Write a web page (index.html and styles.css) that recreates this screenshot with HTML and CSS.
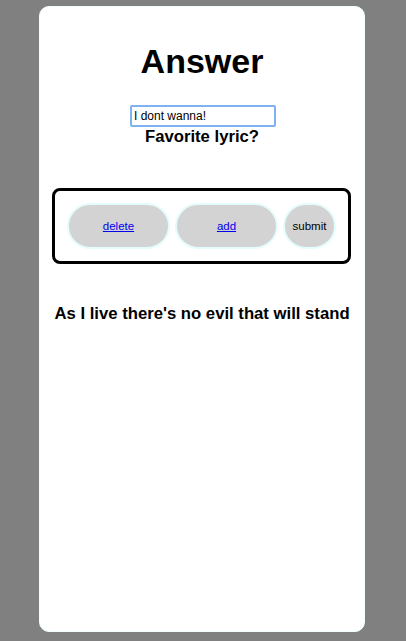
FILE: index.html
```html
<!DOCTYPE html>
<html>
<head>
<meta charset="utf-8">
<link rel="stylesheet" href="styles.css">
</head>
<body>
<div class="card">
  <h1 class="title">Answer</h1>
  <div class="form">
    <input class="lyric-input" type="text" value="I dont wanna!">
    <label class="label">Favorite lyric?</label>
  </div>
  <div class="actions">
    <button class="btn wide"><a href="#">delete</a></button>
    <button class="btn wide"><a href="#">add</a></button>
    <button class="btn round">submit</button>
  </div>
  <p class="lyric">As I live there's no evil that will stand</p>
</div>
</body>
</html>
```
FILE: styles.css
```css
html, body {
  margin: 0;
  padding: 0;
}
body {
  background: #808080;
  font-family: "Liberation Sans", Arial, sans-serif;
  padding: 6px 0 0 39px;
  height: 641px;
  box-sizing: border-box;
}
.card {
  width: 324px;
  height: 624px;
  background: #fff;
  border: 1px solid #f0ffff;
  border-radius: 10px;
  display: flex;
  flex-direction: column;
  align-items: center;
}
.title {
  margin: 35px 0 0;
  font-size: 34px;
  line-height: 39px;
  font-weight: bold;
  color: #000;
}
.form {
  margin-top: 24px;
  display: flex;
  flex-direction: column;
  align-items: center;
}
.lyric-input {
  width: 146px;
  height: 22px;
  box-sizing: border-box;
  border: 2px solid #7fb2f0;
  border-radius: 2px;
  padding: 0 2px;
  font-family: "Liberation Sans", Arial, sans-serif;
  font-size: 12px;
  color: #000;
  outline: none;
  margin-left: 2px;
}
.label {
  font-size: 16.7px;
  font-weight: bold;
  line-height: 20px;
  margin-top: 0;
}
.actions {
  margin-top: 41px;
  width: 299px;
  box-sizing: border-box;
  border: 3px solid #000;
  border-radius: 8px;
  padding: 12px;
  display: flex;
  gap: 5px;
  margin-right: 1px;
}
.btn {
  height: 46px;
  box-sizing: border-box;
  border: 2px solid #e4fcfc;
  background: #d3d3d3;
  border-radius: 23px;
  font-family: "Liberation Sans", Arial, sans-serif;
  font-size: 11.5px;
  color: #000;
  padding: 0;
}
.btn a {
  color: #0000ee;
  text-decoration: underline;
}
.wide {
  width: 103px;
}
.round {
  width: 53px;
}
.lyric {
  margin: 40px 0 0;
  font-size: 16.7px;
  font-weight: bold;
  line-height: 20px;
}
```
